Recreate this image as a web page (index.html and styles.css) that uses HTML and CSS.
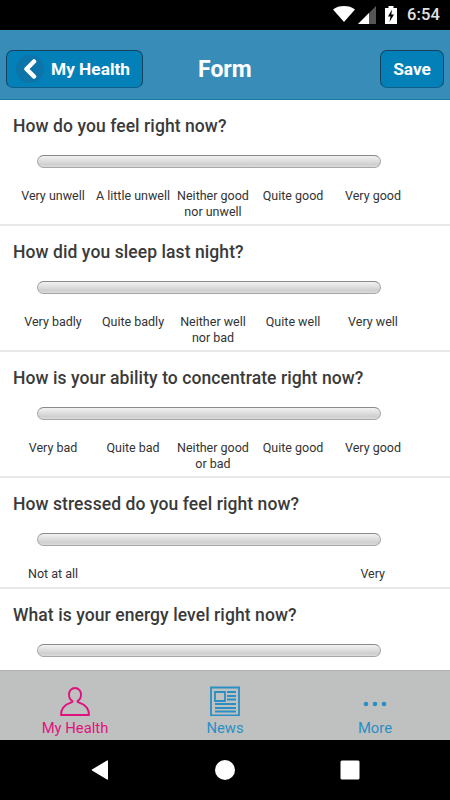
FILE: index.html
```html
<!DOCTYPE html>
<html lang="en">
<head>
<meta charset="utf-8">
<title>Form</title>
<link rel="stylesheet" href="styles.css">
</head>
<body>
<div class="app">
  <div class="status">
    <svg class="st-wifi" width="22" height="16" viewBox="0 0 22 16"><path d="M0 3.500C3 1 6.800 0 11 0s8 1 11 3.500L11 16z" fill="#fff"/></svg>
    <svg class="st-signal" width="18" height="18" viewBox="0 0 18 18"><path d="M0 18L18 0v18z" fill="#555"/><path d="M0 18L11 7v11z" fill="#fff"/></svg>
    <svg class="st-batt" width="12" height="18" viewBox="0 0 12 18"><path d="M3.500 0h5v2H12v16H0V2h3.500z" fill="#fff"/><path d="M7 3.500L3 10.500h2.500L4.500 16 9 8.500H6.300z" fill="#000"/></svg>
    <span class="st-time">6:54</span>
  </div>
  <header class="head">
    <div class="btn back">
      <span class="back-circle"><svg width="16" height="20" viewBox="0 0 16 20"><path d="M12 2.500L4.500 10l7.500 7.500" fill="none" stroke="#fff" stroke-width="4.500" stroke-linecap="round" stroke-linejoin="round"/></svg></span>
      <span>My Health</span>
    </div>
    <h1 class="title">Form</h1>
    <div class="btn save">Save</div>
  </header>
  <main class="form">
    <section class="q">
      <h2>How do you feel right now?</h2>
      <div class="track"></div>
      <div class="labels"><span>Very unwell</span><span>A little unwell</span><span>Neither good nor unwell</span><span>Quite good</span><span>Very good</span></div>
    </section>
    <section class="q">
      <h2>How did you sleep last night?</h2>
      <div class="track"></div>
      <div class="labels"><span>Very badly</span><span>Quite badly</span><span>Neither well nor bad</span><span>Quite well</span><span>Very well</span></div>
    </section>
    <section class="q">
      <h2>How is your ability to concentrate right now?</h2>
      <div class="track"></div>
      <div class="labels"><span>Very bad</span><span>Quite bad</span><span>Neither good or bad</span><span>Quite good</span><span>Very good</span></div>
    </section>
    <section class="q short">
      <h2>How stressed do you feel right now?</h2>
      <div class="track"></div>
      <div class="labels ends"><span>Not at all</span><span>Very</span></div>
    </section>
    <section class="q last">
      <h2>What is your energy level right now?</h2>
      <div class="track"></div>
    </section>
  </main>
  <nav class="tabs">
    <div class="tab active">
      <svg width="30" height="30" viewBox="0 0 30 30"><path d="M15 2C11.500 2 9 5 9 8.500 9 11.500 10.500 14 12.500 15v.8C12.500 17 1 17 1 29h28C29 17 17.500 17 17.500 15.800V15c2-1 3.500-3.500 3.500-6.500C21 5 18.500 2 15 2z" fill="none" stroke="#e0117f" stroke-width="1.900" stroke-linejoin="round"/></svg>
      <span>My Health</span>
    </div>
    <div class="tab">
      <svg width="30" height="30" viewBox="0 0 30 30"><path d="M1 1.500h28v28H1z" fill="none" stroke="#2a8fc4" stroke-width="1.800"/><path d="M5 6h10v9H5z" fill="none" stroke="#2a8fc4" stroke-width="1.800"/><path d="M17 6h9M17 10h9M17 13.500h9M5 18h21M5 22h21M5 25.500h21" stroke="#2a8fc4" stroke-width="1.800"/></svg>
      <span>News</span>
    </div>
    <div class="tab">
      <svg width="30" height="30" viewBox="0 0 30 30"><circle cx="6" cy="18" r="2.300" fill="#2a8fc4"/><circle cx="15" cy="18" r="2.300" fill="#2a8fc4"/><circle cx="24" cy="18" r="2.300" fill="#2a8fc4"/></svg>
      <span>More</span>
    </div>
  </nav>
  <footer class="sysnav">
    <svg width="18" height="20" viewBox="0 0 18 20"><path d="M17 1v18a.6.6 0 0 1-1 .5L1 10.500a.6.6 0 0 1 0-1L16 .5a.6.6 0 0 1 1 .5z" fill="#fff"/></svg>
    <svg width="20" height="20" viewBox="0 0 20 20"><circle cx="10" cy="10" r="10" fill="#fff"/></svg>
    <svg width="20" height="20" viewBox="0 0 20 20"><rect x="0.500" y="0.500" width="19" height="19" rx="1.500" fill="#fff"/></svg>
  </footer>
</div>
</body>
</html>
```

FILE: styles.css
```css
* { box-sizing: border-box; }
html, body { margin: 0; padding: 0; }
body { width: 450px; height: 800px; overflow: hidden; font-family: Roboto, "Liberation Sans", sans-serif; background: #fff; }
.app { width: 450px; height: 800px; display: flex; flex-direction: column; }

.status { height: 30px; background: #000; display: flex; align-items: center; color: #e2e2e2; padding: 0 10px 0 0; justify-content: flex-end; flex: none; }
.st-wifi { margin-right: 3px; margin-top: -2px; }
.st-signal { margin-right: 9px; margin-top: -1px; }
.st-batt { margin-right: 10px; margin-top: -1px; }
.st-time { font-size: 16.500px; font-weight: 500; letter-spacing: 0.100px; margin-top: -1px; }

.head { height: 70px; background: #378db8; border-bottom: 1px solid #1d7aa6; display: flex; align-items: center; justify-content: space-between; padding: 0 6px; position: relative; flex: none; }
.btn { height: 38px; background: #0480b9; border: 1px solid #16425f; border-bottom-color: #0f5f8a; border-radius: 7px; color: #fff; font-size: 17.300px; font-weight: 700; display: flex; align-items: center; margin-top: 9px; }
.back { width: 137px; padding-left: 9px; gap: 7px; }
.back-circle { width: 28px; height: 28px; border-radius: 50%; background: #0c74a8; display: flex; align-items: center; justify-content: center; }
.save { width: 64px; justify-content: center; }
.title { margin: 0; font-size: 23px; font-weight: 700; color: #fff; position: absolute; left: 198px; top: 25px; line-height: 30px; }

.form { flex: 1; overflow: hidden; min-height: 0; }
.q { height: 126px; border-bottom: 2px solid #e8e8e8; padding: 0 0 0 13px; }
.q.short { height: 111px; }
.q.last { border-bottom: 0; height: 82px; }
.q h2 { margin: 0; font-size: 17.500px; font-weight: 500; color: #3a3a3a; line-height: 20px; padding-top: 16px; letter-spacing: 0.080px; }
.track { width: 344px; height: 13px; margin: 19px 0 0 24px; border: 1px solid #a6a6a6; border-top-color: #8a8a8a; border-radius: 7px; background: linear-gradient(#f2f2f2, #dedede 45%, #cfcfcf 78%, #dcdcdc); }
.labels { display: flex; width: 400px; margin-top: 20px; font-size: 12.500px; color: #333; text-align: center; line-height: 15.500px; }
.labels span { width: 80px; flex: none; }
.labels.ends { justify-content: space-between; width: 357px; margin-left: 15px; }
.labels.ends span { width: auto; }

.tabs { height: 70px; background: #bfc1c0; border-top: 1px solid #b0b0b0; display: flex; flex: none; }
.tab { width: 150px; display: flex; flex-direction: column; align-items: center; color: #2a8fc4; font-size: 14.800px; line-height: 17px; padding-top: 15px; }
.tab svg { flex: none; }
.tab span { margin-top: 4px; }
.tab.active { color: #e0117f; }

.sysnav { height: 60px; background: #000; display: flex; align-items: center; flex: none; padding-left: 91px; gap: 106px; }
.sysnav svg:last-child { margin-left: -1px; }
```
